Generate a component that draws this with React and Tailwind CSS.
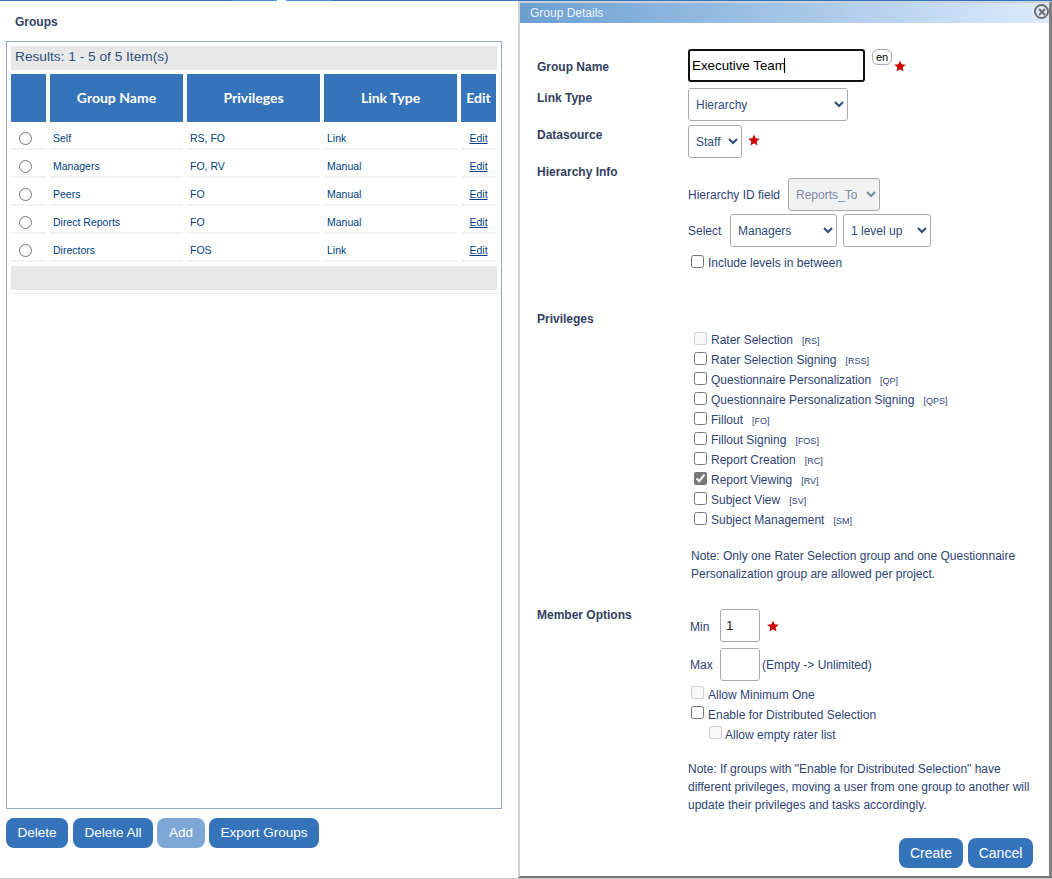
import React from 'react';

const rows = [
  { name: 'Self', priv: 'RS, FO', link: 'Link' },
  { name: 'Managers', priv: 'FO, RV', link: 'Manual' },
  { name: 'Peers', priv: 'FO', link: 'Manual' },
  { name: 'Direct Reports', priv: 'FO', link: 'Manual' },
  { name: 'Directors', priv: 'FOS', link: 'Link' },
];

const privileges = [
  { label: 'Rater Selection', tag: '[RS]', disabled: true },
  { label: 'Rater Selection Signing', tag: '[RSS]' },
  { label: 'Questionnaire Personalization', tag: '[QP]' },
  { label: 'Questionnaire Personalization Signing', tag: '[QPS]' },
  { label: 'Fillout', tag: '[FO]' },
  { label: 'Fillout Signing', tag: '[FOS]' },
  { label: 'Report Creation', tag: '[RC]' },
  { label: 'Report Viewing', tag: '[RV]', checked: true },
  { label: 'Subject View', tag: '[SV]' },
  { label: 'Subject Management', tag: '[SM]' },
];

const Star = () => (
  <svg width="12" height="12" viewBox="0 0 24 24" className="shrink-0">
    <polygon points="12,1 15.2,8.6 23.5,9.3 17.2,14.8 19.1,23 12,18.7 4.9,23 6.8,14.8 0.5,9.3 8.8,8.6" fill="#cc0000" />
  </svg>
);

const Btn = ({ children, className = 'bg-[#3574bb]' }) => (
  <button className={`h-[30px] rounded-lg text-[13.5px] text-white ${className}`}>{children}</button>
);

const Label = ({ children, className = '' }) => (
  <div className={`w-[151px] shrink-0 text-xs leading-[14px] font-bold text-[#33405f] ${className}`}>{children}</div>
);

const selectCls = 'h-[33px] rounded-[3px] border border-[#aaaaaa] pl-[3px] text-xs';

const App = () => {
  return (
    <div className="w-[1052px] h-[879px] overflow-hidden bg-white font-['Liberation_Sans',Arial,sans-serif] text-xs text-[#2f4374]">
      <div className="flex h-px">
        <div className="w-[232px] bg-[#3574bb]" />
        <div className="w-[45px] bg-[#4d94d6]" />
        <div className="w-[9px] bg-white" />
        <div className="w-[46px] bg-[#4d94d6]" />
        <div className="flex-1 bg-[#3574bb]" />
      </div>
      <div className="flex h-[877px]">
        {/* left side: group list */}
        <div className="w-[518px] shrink-0 pl-[6px]">
          <div className="pl-[9px] pt-[14px] text-xs leading-[14px] font-bold text-[#33405f]">Groups</div>
          <div className="mt-3 h-[768px] w-[496px] border border-[#9aa8bd] p-1">
            <div className="flex h-6 items-center bg-[#e8e8e8] pb-[2px] pl-1 text-[13.7px] text-[#2f4f78]">Results: 1 - 5 of 5 Item(s)</div>
            <div className="mt-1 grid h-12 grid-cols-[35px_133px_133px_133px_35px] gap-x-1 font-['Lato',sans-serif] text-sm font-bold text-white">
              <div className="bg-[#3574bb]" />
              <div className="flex items-center justify-center bg-[#3574bb]">Group Name</div>
              <div className="flex items-center justify-center bg-[#3574bb]">Privileges</div>
              <div className="flex items-center justify-center bg-[#3574bb]">Link Type</div>
              <div className="flex items-center justify-center bg-[#3574bb]">Edit</div>
            </div>
            {rows.map(r => (
              <div key={r.name} className="grid h-7 grid-cols-[35px_133px_133px_133px_35px] gap-x-1 text-[10.5px] text-[#004080]">
                <div className="flex items-center justify-center border-b-2 border-[#f2f2f2] pt-[6px] pr-[6px]">
                  <input type="radio" name="group" className="m-0 h-[13px] w-[13px]" />
                </div>
                <div className="flex items-center border-b-2 border-[#f2f2f2] pt-[6px] pl-[3px]">{r.name}</div>
                <div className="flex items-center border-b-2 border-[#f2f2f2] pt-[6px] pl-[3px]">{r.priv}</div>
                <div className="flex items-center border-b-2 border-[#f2f2f2] pt-[6px] pl-[3px]">{r.link}</div>
                <div className="flex items-center justify-center border-b-2 border-[#f2f2f2] pt-[6px]">
                  <a href="#" className="text-[#003f87] underline">Edit</a>
                </div>
              </div>
            ))}
            <div className="mt-1 h-6 bg-[#e8e8e8]" />
            <div className="-mx-1 mt-[3px] border-b border-[#eeeeee]" />
          </div>
          <div className="mt-[9px] flex">
            <Btn className="w-[62px] bg-[#3574bb]">Delete</Btn>
            <Btn className="ml-[5px] w-20 bg-[#3574bb]">Delete All</Btn>
            <Btn className="ml-1 w-12 bg-[#7ea7d6]">Add</Btn>
            <Btn className="ml-1 w-[110px] bg-[#3574bb]">Export Groups</Btn>
          </div>
        </div>

        {/* right side: dialog */}
        <div className="relative flex-1 border-t-2 border-r-[3px] border-b-2 border-l-2 border-t-[#c8d2dc] border-r-[#808080] border-b-[#787878] border-l-[#d4d0c8]">
          <div className="flex h-5 items-center bg-gradient-to-r from-[#6b9fd1] to-[#dcebfb] pl-[10px] text-xs text-[#eef4fa]">Group Details</div>
          <button className="absolute top-px right-0 flex h-[15px] w-[15px] items-center justify-center rounded-full border-2 border-[#6e6e6e]">
            <svg width="8" height="8" viewBox="0 0 8 8"><path d="M1 1L7 7M7 1L1 7" stroke="#6e6e6e" strokeWidth="2" /></svg>
          </button>

          <div className="pl-[17px]">
            <div className="mt-[26px] flex h-[33px] items-center">
              <Label className="pt-[3px]">Group Name</Label>
              <div className="relative">
                <input defaultValue="Executive Team" className="h-[33px] w-[177px] rounded-[3px] border-2 border-[#111111] pl-[2px] text-[13.33px] text-black outline-none" />
                <span className="absolute top-[9px] left-[96px] h-[15px] w-px bg-black" />
              </div>
              <span className="mb-[17px] ml-[7px] rounded-md border border-[#aaaaaa] px-[3px] text-[11px] leading-[14px] text-black">en</span>
              <span className="ml-[2px]"><Star /></span>
            </div>
            <div className="mt-[6px] flex">
              <Label className="pt-[3px]">Link Type</Label>
              <select className={`${selectCls} w-40 bg-white text-[#2f4a78]`}><option>Hierarchy</option></select>
            </div>
            <div className="mt-1 flex items-start">
              <Label className="pt-[3px]">Datasource</Label>
              <select className={`${selectCls} w-[54px] bg-white text-[#2f4a78]`}><option>Staff</option></select>
              <span className="ml-[6px] mt-[9px]"><Star /></span>
            </div>
            <div className="mt-[6px] flex">
              <Label className="pt-px">Hierarchy Info</Label>
              <div className="pt-[14px]">
                <div className="flex items-center">
                  <span className="w-[100px]">Hierarchy ID field</span>
                  <select disabled className={`${selectCls} w-[92px] bg-[#f2f2f2] text-[#7a8aa5]`}><option>Reports_To</option></select>
                </div>
                <div className="mt-[3px] flex items-center">
                  <span className="w-[42px]">Select</span>
                  <select className={`${selectCls} w-[107px] bg-white text-[#2f4a78]`}><option>Managers</option></select>
                  <select className={`${selectCls} ml-[6px] w-[88px] bg-white text-[#2f4a78]`}><option>1 level up</option></select>
                </div>
                <label className="mt-[6px] ml-[3px] flex h-4 items-center">
                  <input type="checkbox" className="m-0 h-[13px] w-[13px]" />
                  <span className="ml-[4px] pt-[4px]">Include levels in between</span>
                </label>
              </div>
            </div>

            <div className="mt-[43px] flex">
              <Label>Privileges</Label>
              <div className="pt-[17px] pl-[6px]">
                {privileges.map(p => (
                  <label key={p.tag} className="flex h-5 items-center">
                    <input type="checkbox" disabled={p.disabled} defaultChecked={p.checked} className="m-0 mb-[2px] h-[13px] w-[13px] accent-[#777777]" />
                    <span className="ml-[4px] pt-[2px]">{p.label}</span>
                    <span className="ml-[9px] pt-[3px] text-[9px]">{p.tag}</span>
                  </label>
                ))}
                <p className="mt-[18px] -ml-[3px] w-[345px] leading-[18px]">Note: Only one Rater Selection group and one Questionnaire Personalization group are allowed per project.</p>
              </div>
            </div>

            <div className="mt-[25px] flex">
              <Label>Member Options</Label>
              <div className="pt-px">
                <div className="flex items-center">
                  <span className="w-[32px] pl-[2px] pt-[2px]">Min</span>
                  <input defaultValue="1" className="h-[33px] w-10 rounded-[3px] border border-[#aaaaaa] pl-[5px] text-[13.33px] text-[#222222]" />
                  <span className="ml-[7px]"><Star /></span>
                </div>
                <div className="mt-[6px] flex items-center">
                  <span className="w-[32px] pl-[2px]">Max</span>
                  <input className="h-[33px] w-10 rounded-[3px] border border-[#aaaaaa]" />
                  <span className="ml-[2px]">(Empty -&gt; Unlimited)</span>
                </div>
                <label className="mt-[2px] ml-[3px] flex h-5 items-center">
                  <input type="checkbox" disabled className="m-0 mb-[2px] h-[13px] w-[13px]" />
                  <span className="ml-[4px] pt-[4px]">Allow Minimum One</span>
                </label>
                <label className="ml-[3px] flex h-5 items-center">
                  <input type="checkbox" className="m-0 mb-[2px] h-[13px] w-[13px]" />
                  <span className="ml-[4px] pt-[4px]">Enable for Distributed Selection</span>
                </label>
                <label className="ml-[21px] flex h-5 items-center">
                  <input type="checkbox" disabled className="m-0 mb-[2px] h-[13px] w-[13px]" />
                  <span className="ml-[3px] pt-[4px]">Allow empty rater list</span>
                </label>
                <p className="mt-[17px] w-[345px] leading-[18px]">Note: If groups with "Enable for Distributed Selection" have different privileges, moving a user from one group to another will update their privileges and tasks accordingly.</p>
              </div>
            </div>
          </div>

          <div className="mt-[24px] flex justify-end gap-[5px] pr-[16px]">
            <Btn className="w-16 bg-[#3574bb] text-[14px]">Create</Btn>
            <Btn className="w-[65px] bg-[#3574bb] text-[14px]">Cancel</Btn>
          </div>
        </div>
      </div>
      <div className="h-px bg-[#cccccc]" />
    </div>
  );
};

export default App;
